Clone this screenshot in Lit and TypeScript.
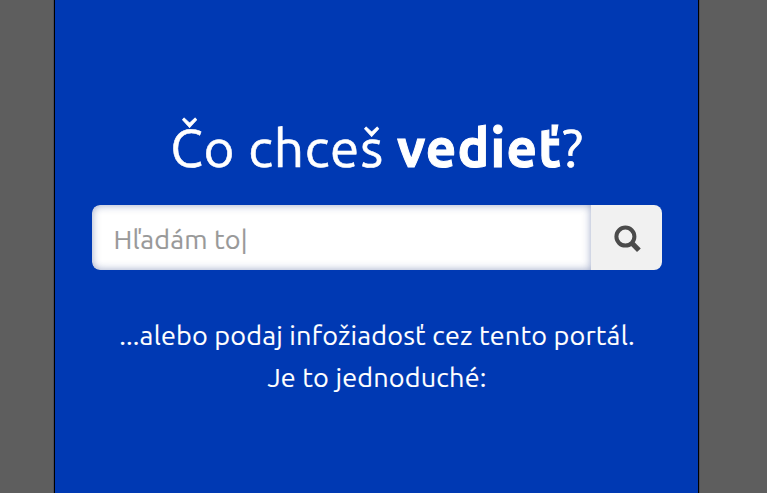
import { LitElement, html, css } from "lit";
import { customElement } from "lit/decorators.js";

@customElement("app-root")
export class AppRoot extends LitElement {
  static styles = css`
    :host {
      display: block;
      height: 100vh;
      overflow: hidden;
      background: #5e5e5e;
      font-family: Ubuntu, "Noto Sans", sans-serif;
      color: #fff;
    }
    .panel {
      box-sizing: border-box;
      width: 645px;
      height: 100%;
      margin-left: 54px;
      padding: 107px 36px 0 37px;
      border: solid #000;
      border-width: 0 1px;
      background: #0039b3;
      box-shadow: 0 0 1px #003;
      display: flex;
      flex-direction: column;
    }
    h1 {
      margin: 0 0 18px;
      height: 80px;
      font-size: 53px;
      line-height: 81px;
      font-weight: 400;
      letter-spacing: 0.8px;
      -webkit-text-stroke: 0.6px currentColor;
      text-align: center;
      white-space: nowrap;
    }
    h1 b {
      font-weight: 700;
      letter-spacing: 1.2px;
      -webkit-text-stroke-width: 1px;
    }
    form {
      display: flex;
      height: 65px;
      margin: 0;
      border-radius: 8px;
      overflow: hidden;
    }
    .field {
      flex: 1;
      padding-left: 21.5px;
      background: #fff;
      box-shadow: inset 0 0 9px rgba(20, 45, 120, 0.42);
      border-radius: 8px 0 0 8px;
      color: #999;
      font-size: 27px;
      letter-spacing: 0.15px;
      -webkit-text-stroke: 0.15px currentColor;
      line-height: 68px;
      white-space: nowrap;
    }
    button {
      width: 71px;
      border: 0;
      padding: 2px 0 0 2px;
      background: #f1f1f1;
      display: flex;
      align-items: center;
      justify-content: center;
    }
    svg { display: block; }
    p {
      margin: 44px 0 0;
      font-size: 27px;
      letter-spacing: 0.18px;
      -webkit-text-stroke: 0.1px currentColor;
      line-height: 42px;
      text-align: center;
      white-space: nowrap;
    }
    .line { display: block; }
  `;

  render() {
    return html`
      <main class="panel">
        <h1><span>Čo chceš</span> <b>vedieť</b>?</h1>
        <form>
          <div class="field"><span>Hľadám to|</span></div>
          <button type="button" aria-label="Hľadať">
            <svg width="28" height="28" viewBox="0 0 28 28" fill="none" stroke="#4b4b4b">
              <circle cx="11.4" cy="11.6" r="9" stroke-width="4" />
              <path d="M17.3 17.5 24.9 25.3" stroke-width="5.2" />
            </svg>
          </button>
        </form>
        <p>
          <span class="line">...alebo podaj infožiadosť cez tento portál.</span>
          <span class="line">Je to jednoduché:</span>
        </p>
      </main>
    `;
  }
}
